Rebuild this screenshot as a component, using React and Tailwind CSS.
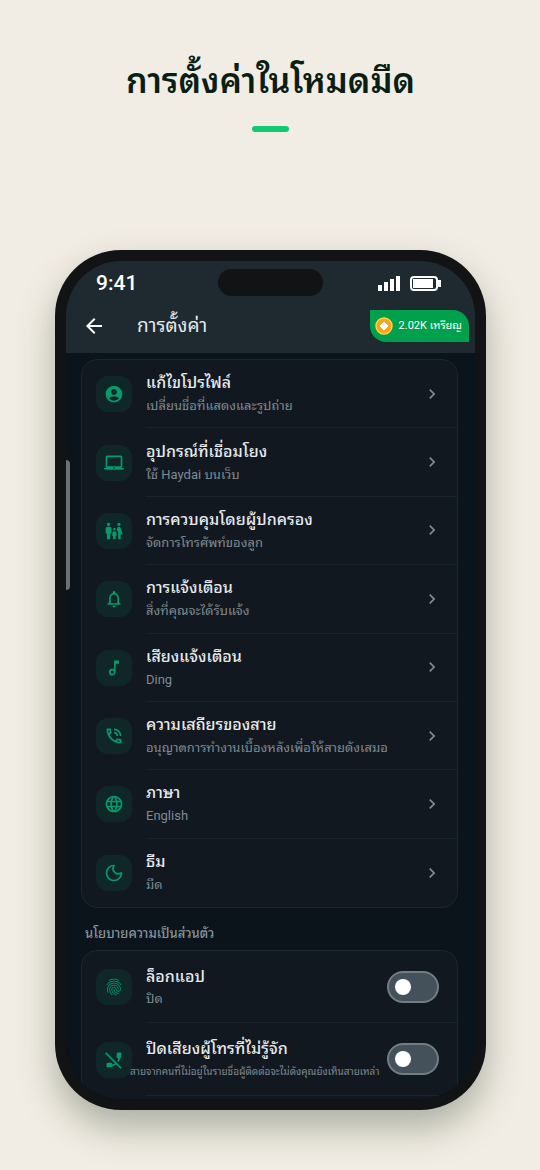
import { Moon } from 'lucide-react'
import {
  MdAccountCircle,
  MdArrowBack,
  MdChevronRight,
  MdFamilyRestroom,
  MdFingerprint,
  MdLanguage,
  MdNotificationsNone,
  MdOutlineLaptopMac,
  MdOutlineMusicNote,
  MdOutlinePhoneInTalk,
  MdPhoneDisabled,
} from 'react-icons/md'

const SETTINGS = [
  { id: 'profile', icon: MdAccountCircle, title: 'แก้ไขโปรไฟล์', detail: 'เปลี่ยนชื่อที่แสดงและรูปถ่าย' },
  { id: 'devices', icon: MdOutlineLaptopMac, title: 'อุปกรณ์ที่เชื่อมโยง', detail: 'ใช้ Haydai บนเว็บ' },
  { id: 'parental', icon: MdFamilyRestroom, title: 'การควบคุมโดยผู้ปกครอง', detail: 'จัดการโทรศัพท์ของลูก' },
  { id: 'notifications', icon: MdNotificationsNone, title: 'การแจ้งเตือน', detail: 'สิ่งที่คุณจะได้รับแจ้ง' },
  { id: 'sound', icon: MdOutlineMusicNote, title: 'เสียงแจ้งเตือน', detail: 'Ding' },
  { id: 'calls', icon: MdOutlinePhoneInTalk, title: 'ความเสถียรของสาย', detail: 'อนุญาตการทำงานเบื้องหลังเพื่อให้สายดังเสมอ' },
  { id: 'language', icon: MdLanguage, title: 'ภาษา', detail: 'English' },
  { id: 'theme', icon: Moon, title: 'ธีม', detail: 'มืด' },
]

function IconTile({ icon: Icon }) {
  return (
    <span className="flex size-9 shrink-0 items-center justify-center rounded-xl bg-[#0f2729] text-[#079a6b]">
      <Icon className="size-5" />
    </span>
  )
}

function SettingRow({ icon, title, detail }) {
  return (
    <button type="button" className="group flex w-full items-stretch pl-3.5 text-left">
      <span className="flex items-center">
        <IconTile icon={icon} />
      </span>
      <span className="ml-3.5 flex min-w-0 flex-1 items-center justify-between border-b border-[#19232a] pr-[15px] group-last:border-b-0">
        <span className="flex min-w-0 flex-col gap-px">
          <span className="text-base leading-6 font-medium whitespace-nowrap text-[#e6eaed]">{title}</span>
          <span className="text-[13px] leading-5 whitespace-nowrap text-[#7f8a92]">{detail}</span>
        </span>
        <MdChevronRight className="size-5 shrink-0 text-[#7f8a92]" />
      </span>
    </button>
  )
}

function Toggle({ id }) {
  return (
    <span className="relative flex h-8 w-13 shrink-0">
      <input
        id={id}
        type="checkbox"
        role="switch"
        className="peer size-full appearance-none rounded-full border-2 border-[#717d85] bg-[#45515a] checked:bg-[#00a650]"
      />
      <span className="pointer-events-none absolute top-2 left-2 size-4 rounded-full bg-white peer-checked:left-7" />
    </span>
  )
}

function StatusBar() {
  return (
    <div className="grid h-[43px] grid-cols-3 items-center px-7.5 text-white">
      <span className="text-[21px] leading-6 font-medium">9:41</span>
      <span className="h-[27px] w-[105px] justify-self-center rounded-full bg-[#111314]" />
      <span className="flex items-center gap-2.5 justify-self-end pr-[3px]">
        <svg className="h-4 w-[22px]" viewBox="0 0 22 16" fill="currentColor" aria-hidden="true">
          <path d="M0 10h4v6H0zM6 7h4v9H6zM12 4h4v12h-4zM18 1h4v15h-4z" />
        </svg>
        <svg className="h-4 w-8" viewBox="0 0 32 16" fill="none" aria-hidden="true">
          <rect x="1" y="2" width="26" height="13" rx="3" stroke="currentColor" strokeWidth="2" />
          <rect x="3" y="4" width="20" height="9" fill="currentColor" />
          <path d="M28 5h3v7h-3z" fill="currentColor" />
        </svg>
      </span>
    </div>
  )
}

export default function App() {
  return (
    <main className="flex min-h-screen flex-col items-center bg-[#f2ede4] pt-[57px] pr-[54px] pb-15 pl-[55px] font-['Roboto','Noto_Sans_Thai_Looped','Noto_Sans_Thai',sans-serif]">
      <h1 className="text-[34px] leading-[48px] font-semibold whitespace-nowrap text-[#0a1f14]">การตั้งค่าในโหมดมืด</h1>
      <span className="mt-[21px] h-1.5 w-[37px] rounded-full bg-[#12c972]" />

      <div className="mt-[118px] flex w-full flex-1 rounded-[66px] bg-[#111314] p-[11px] shadow-[0_18px_36px_rgba(40,60,40,0.35)]">
        <div className="relative h-[838px] w-full overflow-hidden rounded-[55px] bg-[#0a141a]">
          <header className="bg-[#1f2a30] pb-[5px]">
            <StatusBar />
            <div className="flex h-11 items-center pr-1.5 pl-4">
              <button type="button" aria-label="ย้อนกลับ" className="text-white">
                <MdArrowBack className="size-6" />
              </button>
              <h2 className="ml-[31px] flex-1 text-[19px] leading-6 text-[#e6eaed]">การตั้งค่า</h2>
              <button
                type="button"
                className="flex h-8 items-center gap-1.5 rounded-tr-2xl rounded-bl-2xl bg-[#00a04c] pr-[7px] pl-[5px] text-[11px] whitespace-nowrap text-white"
              >
                <svg className="size-[18px]" viewBox="0 0 18 18" aria-hidden="true">
                  <circle cx="9" cy="9" r="8" fill="#f9a61a" stroke="#ffd04f" strokeWidth="1.5" />
                  <path d="M9 5 13 9 9 13 5 9z" fill="#fff" stroke="#fff" strokeLinejoin="round" />
                </svg>
                2.02K เหรียญ
              </button>
            </div>
          </header>

          <div className="pt-1.5 pr-[17px] pl-[15px]">
            <section className="grid min-h-[549px] auto-rows-fr rounded-2xl border border-[#1b262d] bg-[#11181f]">
              {SETTINGS.map((s) => (
                <SettingRow key={s.id} icon={s.icon} title={s.title} detail={s.detail} />
              ))}
            </section>

            <h3 className="mt-4 mb-1.5 pl-1 text-[13px] leading-5 font-medium text-[#87939b]">นโยบายความเป็นส่วนตัว</h3>

            <section className="rounded-2xl border border-[#1b262d] bg-[#11181f] pb-5">
              <div className="flex items-stretch pl-3.5">
                <div className="flex items-center">
                  <IconTile icon={MdFingerprint} />
                </div>
                <div className="ml-3.5 flex h-[72px] flex-1 items-center justify-between border-b border-[#19232a] pr-[18px]">
                  <label htmlFor="app-lock" className="flex flex-col">
                    <span className="text-base leading-6 font-medium text-[#e6eaed]">ล็อกแอป</span>
                    <span className="text-[13px] leading-5 text-[#7f8a92]">ปิด</span>
                  </label>
                  <Toggle id="app-lock" />
                </div>
              </div>
              <div className="flex items-stretch pl-3.5">
                <div className="flex items-center">
                  <IconTile icon={MdPhoneDisabled} />
                </div>
                <div className="ml-3.5 flex h-[73px] min-w-0 flex-1 items-center justify-between border-b border-[#19232a] pr-[18px]">
                  <label htmlFor="silence" className="-ml-4 flex flex-col gap-px">
                    <span className="pl-4 text-base leading-6 font-medium whitespace-nowrap text-[#e6eaed]">
                      ปิดเสียงผู้โทรที่ไม่รู้จัก
                    </span>
                    <span className="text-[10px] leading-5 whitespace-nowrap text-[#7f8a92]">
                      สายจากคนที่ไม่อยู่ในรายชื่อผู้ติดต่อจะไม่ดังคุณยังเห็นสายเหล่า
                    </span>
                  </label>
                  <Toggle id="silence" />
                </div>
              </div>
            </section>
          </div>
          <span className="absolute top-[199px] left-0 h-[130px] w-1 rounded-r-full bg-[#6b7175]" />
        </div>
      </div>
    </main>
  )
}
